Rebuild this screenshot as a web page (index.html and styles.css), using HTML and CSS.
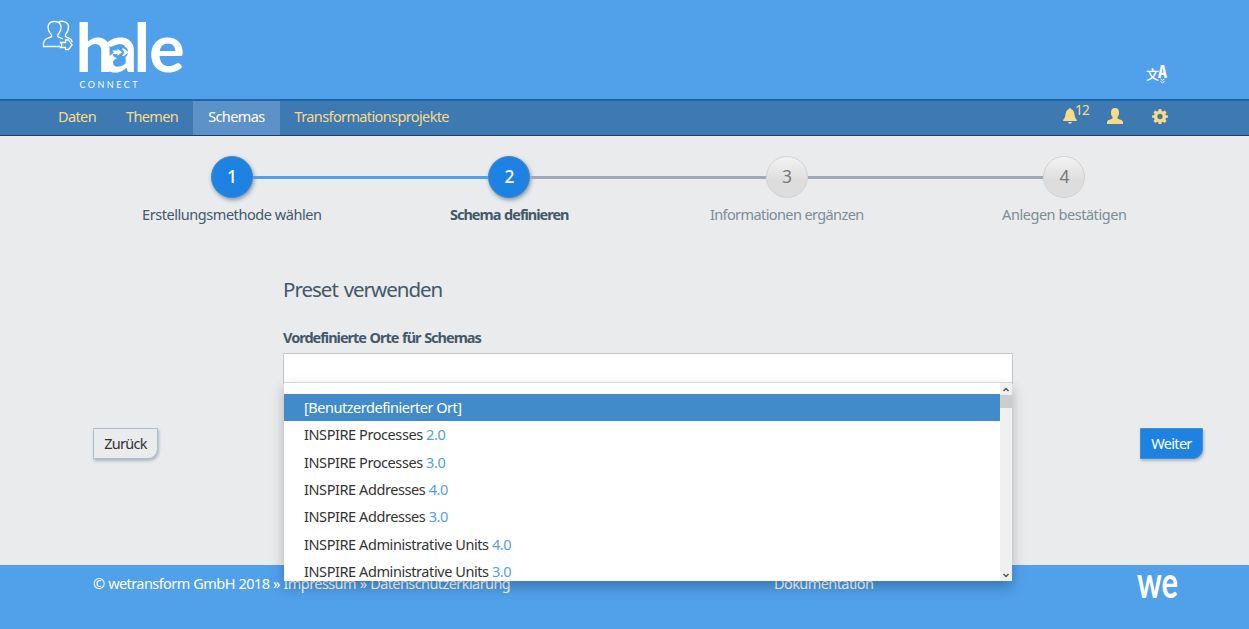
FILE: index.html
```html
<!DOCTYPE html>
<html lang="de">
<head>
<meta charset="utf-8">
<title>hale connect</title>
<link rel="stylesheet" href="styles.css">
</head>
<body>
<header class="header">
  <svg class="logo" width="150" height="84" viewBox="0 0 150 84" role="img" aria-label="hale connect">
    <g class="logo-people">
      <path d="M20 30.500H3.500q-.8-5 2.500-7.500l5.500-2.300v-2q-4-4-3.400-8.500Q9 5.500 14.500 5.500T21 10.200q.6 4.500-3.200 8.500v2l5 2.300"/>
      <path d="M18.500 6.500q2-1.500 4.500-1.200 5 .7 5.500 5 .3 4.500-3 8.300v2l4.700 2.200q1.800 1.500 2 3.500"/>
      <path d="M20.500 26.500h5v-2.500h3l3.500 5-3.500 4.500h-3v-2h-5l1.500-2.500z"/>
    </g>
    <text class="logo-word" y="55.500"><tspan x="35.500">h</tspan><tspan x="63.500">a</tspan><tspan x="93.500">l</tspan><tspan x="109">e</tspan></text>
    <path class="logo-bowl" d="M72.500 36.500q0-6 7-6h3q5.500 0 5.500 5.500t-6 6h-3.500q-6 0-6-5.500z"/>
    <path class="logo-arrow" d="M72 34.500h5.500v-2l4.500 3.700-4.500 3.700v-2H72l2-1.700zM82 32.500h2l4.500 3.700-4.500 3.700h-2l2.300-3.700z"/>
    <text class="logo-sub" x="39.500" y="71.500" textLength="58">CONNECT</text>
  </svg>
  <svg class="lang" width="22" height="20" viewBox="0 0 22 20">
    <text class="lang-cjk" x="-1" y="13.500">文</text>
    <text class="lang-a" x="11" y="12.500">A</text>
    <path class="lang-mark" d="M13.500 14l2 1.300 2-1.300M13.500 16.500l2 1.300 2-1.300"/>
  </svg>
</header>
<nav class="nav">
  <a class="nav-item">Daten</a><a class="nav-item">Themen</a><a class="nav-item active">Schemas</a><a class="nav-item">Transformationsprojekte</a>
  <div class="nav-tools">
    <svg width="14" height="16" viewBox="0 0 14 16"><path d="M7 0q1 0 1 1 3 1 3.300 4.500.2 4.500 2.500 6.500v1H.2v-1q2.300-2 2.500-6.500Q3 2 6 1q0-1 1-1zM5 14h4q-.5 1.700-2 1.700T5 14z"/></svg><span class="count">12</span>
    <svg width="16" height="16" viewBox="0 0 16 16"><path d="M8 0c3 0 4 2 4 4.500 0 2-.6 3.500-1.500 4.500v1.500c1 1 5 1 5.500 3.500v2H0v-2c.5-2.500 4.500-2.500 5.500-3.500V9C4.600 8 4 6.500 4 4.500 4 2 5 0 8 0z"/></svg>
    <svg class="gear" width="16" height="16" viewBox="0 0 16 16"><path fill-rule="evenodd" d="M6.700 1h2.600l.4 2 1.300.6L12.700 2.400l1.800 1.800-1.100 1.700.6 1.300 2 .4v2l-2 .5-.6 1.300 1.100 1.700-1.800 1.800-1.700-1.100-1.300.5-.4 2H6.700l-.4-2-1.300-.5-1.700 1.100-1.800-1.800 1.100-1.700L2 10.100l-2-.5v-2l2-.4.600-1.300-1.100-1.700 1.800-1.800L5 3.600 6.300 3zM8 5.800a2.700 2.700 0 1 0 0 5.400 2.700 2.700 0 0 0 0-5.400z"/></svg>
  </div>
</nav>
<main class="main">
  <ol class="steps">
    <li class="step done"><span class="num">1</span><span class="step-label">Erstellungsmethode wählen</span></li>
    <li class="step current"><span class="num">2</span><span class="step-label">Schema definieren</span></li>
    <li class="step"><span class="num">3</span><span class="step-label">Informationen ergänzen</span></li>
    <li class="step"><span class="num">4</span><span class="step-label">Anlegen bestätigen</span></li>
  </ol>
  <section class="form">
    <h1 class="title">Preset verwenden</h1>
    <label class="label">Vordefinierte Orte für Schemas</label>
    <div class="field">
      <div class="menu">
        <div class="options">
          <div class="option selected">[Benutzerdefinierter Ort]</div>
          <div class="option">INSPIRE Processes <b>2.0</b></div>
          <div class="option">INSPIRE Processes <b>3.0</b></div>
          <div class="option">INSPIRE Addresses <b>4.0</b></div>
          <div class="option">INSPIRE Addresses <b>3.0</b></div>
          <div class="option">INSPIRE Administrative Units <b>4.0</b></div>
          <div class="option">INSPIRE Administrative Units <b>3.0</b></div>
        </div>
        <div class="scrollbar">
          <svg width="12" height="12" viewBox="0 0 12 12"><path d="M3.500 8L6 5.500 8.500 8"/></svg>
          <span class="thumb"></span>
          <svg class="down" width="12" height="12" viewBox="0 0 12 12"><path d="M3.500 5L6 7.500 8.500 5"/></svg>
        </div>
      </div>
    </div>
  </section>
  <div class="actions">
    <button class="btn">Zurück</button>
    <button class="btn primary">Weiter</button>
  </div>
</main>
<footer class="footer">
  <span class="legal">© wetransform GmbH 2018 » Impressum » Datenschutzerklärung</span>
  <span class="docs">Dokumentation</span>
  <svg class="we" width="42" height="30" viewBox="0 0 42 30"><text x="0" y="25.500" textLength="41" lengthAdjust="spacingAndGlyphs">we</text></svg>
</footer>
</body>
</html>
```
FILE: styles.css
```css
* { box-sizing: border-box; }
body { margin: 0; height: 629px; overflow: hidden; display: flex; flex-direction: column; background: #e9ebec; color: #44586a; font: 14.5px/20px "Noto Sans", sans-serif; letter-spacing: -0.45px; }
.header { height: 99px; flex: none; display: flex; justify-content: space-between; background: #50a0ea; padding: 16px 80px 0 40px; fill: #fff; letter-spacing: 0; }
.logo { overflow: visible; }
.logo-people { fill: none; stroke: #fff; stroke-width: 1.300; }
.logo-word { font: 700 67px Lato, sans-serif; }
.logo-bowl { fill: #50a0ea; }
.logo-arrow { fill: #fff; }
.logo-sub { font: 9px Lato, sans-serif; }
.lang { margin-top: 49px; overflow: visible; }
.lang-cjk { font: 500 13px "Noto Sans CJK SC", sans-serif; }
.lang-a { font: 700 17px "Open Sans", sans-serif; font-stretch: 75%; }
.lang-mark { fill: none; stroke: #fff; }
.nav { height: 37px; flex: none; display: flex; padding-left: 43px; background: #3f79b2; border-top: 2px solid #1d66ac; border-bottom: 1px solid #213c59; color: #f7db89; letter-spacing: -0.620px; }
.nav-item { padding: 5px 15px 0; white-space: nowrap; }
.nav-item.active { background: #5c92c7; color: #fff; }
.nav-tools { margin-left: auto; width: 186px; display: flex; padding-top: 7px; fill: #f7db89; }
.count { width: 18px; margin: -8px 14px 0 -2px; font-size: 13.500px; }
.gear { margin-left: 29px; }
.main { height: 429px; flex: none; position: relative; }
.steps { list-style: none; margin: 0 0 0 93px; padding: 20px 0 0; width: 1110px; display: flex; }
.step { flex: 1; height: 80px; display: flex; flex-direction: column; align-items: center; color: #7d8c99; position: relative; }
.step + .step::before { content: ""; position: absolute; top: 20px; right: calc(50% + 21px); width: calc(100% - 42px); height: 3px; background: #9eabb7; }
.step.current::before { background: #50a0ea; }
.num { width: 42px; height: 42px; border-radius: 50%; border: 1px solid #d2d2d2; background: linear-gradient(#f3f3f3, #dddddd 60%); color: #777; font-size: 17.500px; line-height: 39px; text-align: center; }
.done .num, .current .num { background: #1d82e2; border-color: #4b86bf; color: #fff; box-shadow: 1px 2px 4px #8298b0; font-weight: 500; }
.step-label { margin-top: 6px; white-space: nowrap; }
.step:nth-child(3) .step-label { letter-spacing: -0.600px; }
.done { color: #44586a; }
.current { color: #44586a; }
.current .step-label { font-weight: 700; letter-spacing: -1px; word-spacing: 1px; }
.form { margin-left: 283px; width: 730px; padding-top: 41px; }
.title { margin: 0; font-size: 20.500px; line-height: 24px; font-weight: 400; letter-spacing: -1px; word-spacing: 1.500px; }
.label { display: block; margin-top: 26px; font-weight: 700; letter-spacing: -1px; word-spacing: .8px; }
.field { height: 31px; margin-top: 6px; background: #fff; border: 1px solid #c5c7c9; position: relative; }
.menu { position: absolute; top: 28px; left: 0; width: 728px; height: 199px; background: #fff; border-top: 1px solid #d8d8d8; box-shadow: 0 6px 12px rgba(0,0,0,.25); display: flex; z-index: 2; }
.options { flex: 1; overflow: hidden; padding-top: 11px; color: #333; letter-spacing: -0.420px; }
.option { height: 27.360px; padding: 3px 20px 0; white-space: nowrap; }
.option b { font-weight: 400; color: #50a0ea; }
.option.selected { background: #418bca; color: #fff; letter-spacing: -0.470px; }
.scrollbar { width: 12px; background: #f0f0f0; display: flex; flex-direction: column; }
.scrollbar svg { fill: none; stroke: #555; stroke-width: 1.500; }
.thumb { height: 13px; background: #cdcdcd; }
.down { margin-top: auto; }
.actions { position: absolute; top: 292px; left: 93px; width: 1110px; display: flex; justify-content: space-between; }
.btn { width: 65px; height: 31px; padding: 0 0 2px; border: 1px solid #b4bec8; border-radius: 0 0 10px 0; background: #e9ebec; color: #333; font: inherit; letter-spacing: -0.700px; box-shadow: 1px 2px 3px #aab8c6; }
.btn.primary { width: 63px; background: #1d82e2; border-color: #4b8ccc; color: #fff; }
.footer { height: 64px; flex: none; display: flex; background: #50a0ea; color: #fff; padding: 8px 0 0 93px; letter-spacing: -0.580px; }
.legal { width: 681px; word-spacing: .5px; }
.docs { width: 363px; }
.we { margin-top: -1px; fill: #fff; overflow: visible; letter-spacing: 0; }
.we text { font: 700 44px Lato, sans-serif; }
```
